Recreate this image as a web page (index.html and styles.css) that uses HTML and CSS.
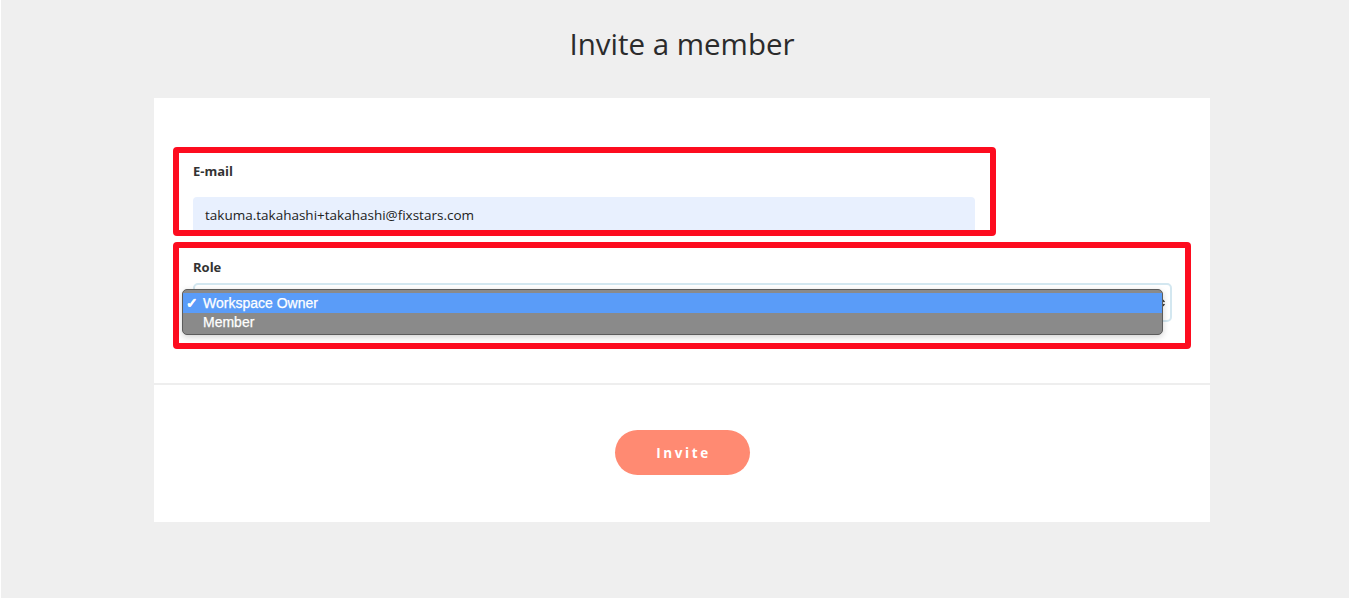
FILE: index.html
```html
<!DOCTYPE html>
<html lang="en">
<head>
<meta charset="utf-8">
<title>Invite a member</title>
<link rel="stylesheet" href="styles.css">
</head>
<body>
<div class="page">
  <h1 class="title">Invite a member</h1>
  <div class="card">
    <div class="form">
      <div class="field field-email">
        <div class="label">E-mail</div>
        <div class="input">takuma.takahashi+takahashi@fixstars.com</div>
      </div>
      <div class="field field-role">
        <div class="label">Role</div>
        <div class="select">
          <svg class="select-arrows" width="8" height="14" viewBox="0 0 8 14"><path d="M1 5.5 L4 2.5 L7 5.5 M1 8.5 L4 11.5 L7 8.5" fill="none" stroke="#333" stroke-width="1.6" stroke-linecap="round" stroke-linejoin="round"/></svg>
        </div>
        <ul class="menu">
          <li class="menu-item selected"><span class="check">✓</span>Workspace Owner</li>
          <li class="menu-item"><span class="check"></span>Member</li>
        </ul>
      </div>
    </div>
    <div class="footer">
      <button class="invite-btn" type="button">Invite</button>
    </div>
  </div>
</div>
</body>
</html>
```

FILE: styles.css
```css
html, body {
  margin: 0;
  padding: 0;
  background: #ffffff;
}

body {
  font-family: "Open Sans", "Noto Sans", sans-serif;
  color: #333333;
}

.page {
  margin-left: 1px;
  width: 1348px;
  height: 598px;
  background: #efefef;
  overflow: hidden;
}

.title {
  width: 1056px;
  margin: 0 0 36px 153px;
  padding-top: 26px;
  font-size: 29.5px;
  line-height: 36px;
  font-weight: 400;
  text-align: center;
  color: #2b2b2b;
}

.card {
  margin-left: 153px;
  width: 1056px;
  background: #ffffff;
}

.form {
  padding: 49px 0 34px 19px;
}

.field {
  box-sizing: border-box;
  border: 6px solid #fd0c1f;
  border-radius: 4px;
}

.field-email {
  width: 823px;
  height: 89px;
  padding: 9px 15px 0 14px;
}

.field-role {
  position: relative;
  width: 1018px;
  height: 107px;
  margin-top: 6px;
  padding: 10px 13px 0 14px;
}

.label {
  font-size: 13px;
  line-height: 18px;
  font-weight: 700;
  color: #333333;
}

.field-email .label {
  margin-bottom: 17px;
}

.field-role .label {
  margin-bottom: 7px;
}

.input {
  box-sizing: border-box;
  height: 33px;
  padding: 2px 0 0 12px;
  background: #e8f0fe;
  border-radius: 4px 4px 0 0;
  font-size: 13.5px;
  line-height: 32px;
  color: #222222;
}

.select {
  box-sizing: border-box;
  height: 39px;
  border: 2px solid #d3e7f0;
  border-radius: 5px;
  background: #ffffff;
  display: flex;
  align-items: center;
  justify-content: flex-end;
  padding: 0 5px 0 12px;
}

.select-arrows {
  display: block;
}

.menu {
  position: absolute;
  left: 3px;
  top: 41px;
  box-sizing: border-box;
  width: 981px;
  height: 46px;
  margin: 0;
  padding: 3px 0 0 0;
  list-style: none;
  background: #8a8a8a;
  border: 1px solid #5c5c5c;
  border-radius: 5px;
  box-shadow: 0 2px 6px rgba(0, 0, 0, 0.18);
  overflow: hidden;
  font-family: "Liberation Sans", Arial, sans-serif;
  font-size: 14px;
  color: #ffffff;
  -webkit-text-stroke: 0.25px #ffffff;
}

.menu-item {
  display: flex;
  align-items: center;
  height: 20px;
  line-height: 20px;
}

.menu-item + .menu-item {
  height: 21px;
  align-items: flex-start;
  line-height: 18px;
}

.menu-item.selected {
  background: #5a9cf8;
}

.check {
  display: inline-block;
  width: 20px;
  padding-left: 3px;
  box-sizing: border-box;
  font-size: 14px;
  font-weight: 700;
}

.footer {
  border-top: 2px solid #eeeeee;
  padding: 45px 0 47px 0;
  display: flex;
  justify-content: center;
}

.invite-btn {
  width: 135px;
  height: 45px;
  border: none;
  border-radius: 23px;
  background: #ff8a72;
  color: #ffffff;
  font-family: "Open Sans", "Noto Sans", sans-serif;
  font-size: 13.5px;
  font-weight: 700;
  letter-spacing: 2.6px;
  padding: 0 0 0 3px;
  cursor: pointer;
}
```
